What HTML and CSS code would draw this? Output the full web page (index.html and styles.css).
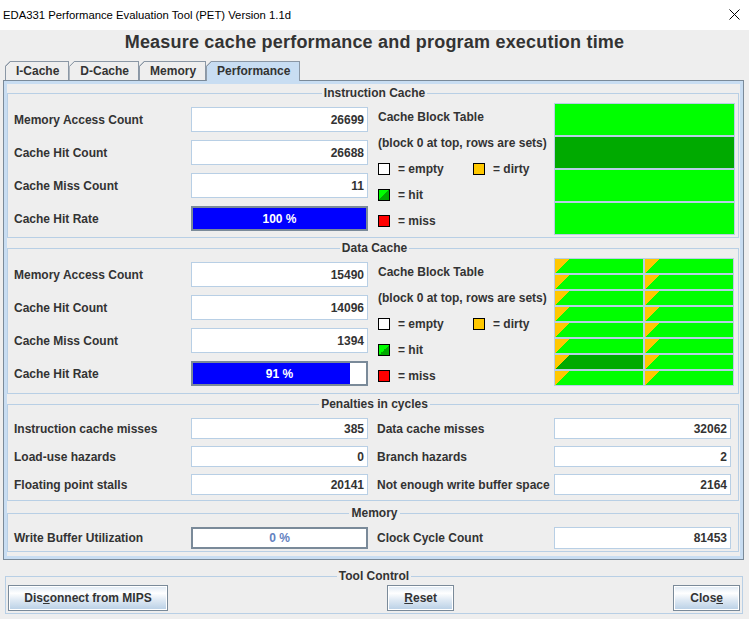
FILE: index.html
```html
<!DOCTYPE html>
<html>
<head>
<meta charset="utf-8">
<title>EDA331 PET</title>
<link rel="stylesheet" href="styles.css">
</head>
<body>
<div class="titlebar">
  <span class="title">EDA331 Performance Evaluation Tool (PET) Version 1.1d</span>
  <svg class="close-x" width="11" height="11" viewBox="0 0 11 11"><path d="M0.5 0.5L10.5 10.5M10.5 0.5L0.5 10.5" stroke="#000" stroke-width="1" fill="none"/></svg>
</div>
<h1 class="heading">Measure cache performance and program execution time</h1>
<div class="tabs">
  <div class="tab">I-Cache</div>
  <div class="tab">D-Cache</div>
  <div class="tab">Memory</div>
  <div class="tab selected">Performance</div>
</div>
<div class="tabpanel">
  <fieldset class="group">
    <legend>Instruction Cache</legend>
    <div class="cache-body">
      <div class="stats">
        <div class="label">Memory Access Count</div><div class="field">26699</div>
        <div class="label">Cache Hit Count</div><div class="field">26688</div>
        <div class="label">Cache Miss Count</div><div class="field">11</div>
        <div class="label">Cache Hit Rate</div>
        <div class="progress"><div class="fill" style="width:100%"></div><span class="pct">100 %</span></div>
      </div>
      <div class="info">
        <div>Cache Block Table</div>
        <div>(block 0 at top, rows are sets)</div>
        <div class="keys"><span class="key first"><i class="sq empty"></i>= empty</span><span class="key"><i class="sq dirty"></i>= dirty</span></div>
        <div class="keys"><span class="key"><i class="sq hit"></i>= hit</span></div>
        <div class="keys"><span class="key"><i class="sq miss"></i>= miss</span></div>
      </div>
      <div class="blocks iblocks">
        <div class="blk"></div>
        <div class="blk hitblk"></div>
        <div class="blk"></div>
        <div class="blk"></div>
      </div>
    </div>
  </fieldset>

  <fieldset class="group dgroup">
    <legend>Data Cache</legend>
    <div class="cache-body">
      <div class="stats">
        <div class="label">Memory Access Count</div><div class="field">15490</div>
        <div class="label">Cache Hit Count</div><div class="field">14096</div>
        <div class="label">Cache Miss Count</div><div class="field">1394</div>
        <div class="label">Cache Hit Rate</div>
        <div class="progress"><div class="fill" style="width:91%"></div><span class="pct">91 %</span></div>
      </div>
      <div class="info">
        <div>Cache Block Table</div>
        <div>(block 0 at top, rows are sets)</div>
        <div class="keys"><span class="key first"><i class="sq empty"></i>= empty</span><span class="key"><i class="sq dirty"></i>= dirty</span></div>
        <div class="keys"><span class="key"><i class="sq hit"></i>= hit</span></div>
        <div class="keys"><span class="key"><i class="sq miss"></i>= miss</span></div>
      </div>
      <div class="blocks dblocks">
        <div class="blk dirtyblk"></div><div class="blk dirtyblk"></div>
        <div class="blk dirtyblk"></div><div class="blk dirtyblk"></div>
        <div class="blk dirtyblk"></div><div class="blk dirtyblk"></div>
        <div class="blk dirtyblk"></div><div class="blk dirtyblk"></div>
        <div class="blk dirtyblk"></div><div class="blk dirtyblk"></div>
        <div class="blk dirtyblk"></div><div class="blk dirtyblk"></div>
        <div class="blk dirtyblk hitdirty"></div><div class="blk dirtyblk"></div>
        <div class="blk dirtyblk"></div><div class="blk dirtyblk"></div>
      </div>
    </div>
  </fieldset>

  <fieldset class="group pgroup">
    <legend>Penalties in cycles</legend>
    <div class="pgrid">
      <div class="label">Instruction cache misses</div><div class="field small">385</div>
      <div class="label">Data cache misses</div><div class="field small">32062</div>
      <div class="label">Load-use hazards</div><div class="field small">0</div>
      <div class="label">Branch hazards</div><div class="field small">2</div>
      <div class="label">Floating point stalls</div><div class="field small">20141</div>
      <div class="label">Not enough write buffer space</div><div class="field small">2164</div>
    </div>
  </fieldset>

  <fieldset class="group mgroup">
    <legend>Memory</legend>
    <div class="mgrid">
      <div class="label">Write Buffer Utilization</div>
      <div class="progress mprog"><div class="fill" style="width:0%"></div><span class="pct">0 %</span></div>
      <div class="label">Clock Cycle Count</div><div class="field mfield">81453</div>
    </div>
  </fieldset>
</div>

<fieldset class="toolctl">
  <legend>Tool Control</legend>
  <div class="btnrow">
    <button class="btn wide">Dis<u>c</u>onnect from MIPS</button>
    <div class="mid"><button class="btn"><u>R</u>eset</button></div>
    <button class="btn">Clos<u>e</u></button>
  </div>
</fieldset>
</body>
</html>
```

FILE: styles.css
```css
* { box-sizing: border-box; }
html, body { margin: 0; padding: 0; }
body {
  width: 749px;
  height: 619px;
  overflow: hidden;
  background: #eeeeee;
  font-family: "Liberation Sans", Arial, sans-serif;
  font-size: 12px;
  font-weight: bold;
  color: #333333;
}

/* title bar */
.titlebar {
  height: 30px;
  background: #ffffff;
  display: flex;
  align-items: center;
  justify-content: space-between;
  padding: 0 9px 1px 3px;
  font-weight: normal;
  font-size: 11.3px;
  color: #000000;
}
.close-x { display: block; }

.heading {
  margin: 0;
  padding-top: 2px;
  height: 31px;
  text-align: center;
  font-size: 18px;
  line-height: 20px;
  letter-spacing: 0.2px;
  color: #333333;
}

/* tabs */
.tabs {
  display: flex;
  align-items: flex-end;
  height: 19px;
  margin-left: 5px;
}
.tab {
  height: 19px;
  padding: 0 9px 0 10px;
  line-height: 18px;
  border: 1px solid #8a97a5;
  border-bottom: none;
  clip-path: polygon(5px 0, 100% 0, 100% 100%, 0 100%, 0 5px);
  background: linear-gradient(135deg, #8a97a5 4.7px, #eeeeee 4.7px) border-box;
}
.tab.selected {
  height: 20px;
  margin-bottom: -1px;
  position: relative;
  z-index: 1;
  background: linear-gradient(135deg, #8a97a5 4.7px, #c8ddf2 4.7px) border-box;
}

.tabpanel {
  margin-left: 3px;
  width: 741px;
  border: 1px solid #7a8a99;
  box-shadow: inset 0 0 0 3px #c8ddf2;
  padding: 5px 4px 7px 3px;
}

/* titled groups */
.group {
  margin: 0;
  min-width: 0;
  border: 1px solid #b8cfe5;
  padding: 3px 3px 2px 6px;
}
.group + .group { margin-top: 3px; }
.group legend, .toolctl legend {
  margin: 0 auto;
  padding: 0 2px;
  line-height: 14px;
  font-size: 12px;
  color: #333333;
}
.dgroup { padding-bottom: 4px; }

.cache-body { display: flex; align-items: flex-start; }

.stats {
  display: grid;
  grid-template-columns: 177px 177px;
  grid-auto-rows: 25px;
  row-gap: 8px;
  align-items: center;
  margin-top: 4px;
}

.field {
  height: 100%;
  background: #ffffff;
  border: 1px solid #b8cfe5;
  text-align: right;
  padding-right: 3px;
  display: flex;
  align-items: center;
  justify-content: flex-end;
}

.progress {
  display: grid;
  height: 25px;
  border: 2px solid #7a8a99;
  background: #ffffff;
}
.progress > * { grid-area: 1 / 1; }
.progress .fill { background: #0000ff; height: 100%; }
.progress .pct { justify-self: center; align-self: center; color: #ffffff; }

.info {
  width: 176px;
  margin-left: 10px;
  margin-top: 1px;
  display: grid;
  grid-template-rows: 26px 25px 27px 26px 26px;
  align-items: center;
}
.keys { display: flex; align-items: center; }
.key { display: flex; align-items: center; }
.key.first { width: 95px; }
.sq {
  display: block;
  width: 12px;
  height: 12px;
  border: 1px solid #000000;
  margin-right: 8px;
}
.sq.empty { background: #ffffff; }
.sq.dirty { background: #ffc800; }
.sq.miss { background: #ff0000; }
.sq.hit { background: linear-gradient(to bottom right, #00ff00 50%, #00aa00 50%); }

.blocks {
  display: grid;
  background: #b8cfe5;
  padding: 1px;
  gap: 2px;
}
.iblocks {
  width: 181px;
  grid-template-rows: repeat(4, 31px);
}
.dblocks {
  width: 180px;
  grid-template-columns: 88px 88px;
  grid-template-rows: repeat(8, 14px);
}
.blk { background: #00ff00; }
.blk.hitblk { background: #00aa00; }
.blk.dirtyblk { background: linear-gradient(135deg, #ffc800 9.9px, #00ff00 9.9px); }
.blk.hitdirty { background: linear-gradient(135deg, #ffc800 9.9px, #00aa00 9.9px); }

/* penalties & memory */
.pgroup { padding: 7px 3px 5px 6px; }
.pgrid {
  display: grid;
  grid-template-columns: 177px 186px 177px 177px;
  grid-auto-rows: 21px;
  row-gap: 7px;
  align-items: center;
}
.pgrid .field, .mgrid .field, .mgrid .progress { width: 177px; }

.mgroup { margin-top: 5px !important; padding: 7px 3px 2px 6px; }
.mgrid {
  display: grid;
  grid-template-columns: 177px 186px 177px 177px;
  grid-auto-rows: 22px;
  align-items: center;
}
.mprog { height: 22px; }
.mprog .pct { color: #6382bf; }

/* tool control */
.toolctl {
  margin: 9px 0 0 5px;
  width: 738px;
  min-width: 0;
  border: 1px solid #b8cfe5;
  padding: 2px 2px 2px 2px;
}
.btnrow { display: flex; align-items: center; }
.mid { flex: 1; display: flex; justify-content: center; }
.btn {
  height: 26px;
  padding: 0 16px;
  margin: 0;
  font-family: "Liberation Sans", Arial, sans-serif;
  font-size: 12px;
  font-weight: bold;
  color: #333333;
  border: 1px solid #7a8a99;
  border-radius: 0;
  box-shadow: inset 0 0 0 1px #ffffff;
  background: linear-gradient(to bottom, #dde8f3 0%, #ffffff 30%, #dde8f3 60%, #b8cfe5 100%);
}
.btn.wide { width: 160px; padding: 0; }
.btn u { text-decoration: underline; }
```
